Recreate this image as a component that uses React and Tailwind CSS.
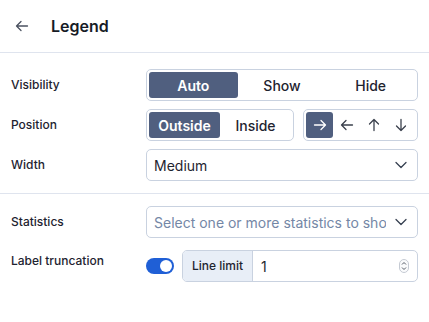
import React, { useState } from 'react';

const Arrow = ({ dir, className }) => {
    const rot = { right: 0, left: 180, up: -90, down: 90 }[dir];
    return (
        <svg width="14" height="14" viewBox="0 0 14 14" className={className} style={{ transform: `rotate(${rot}deg)` }}>
            <path d="M1.5 7h11M8 2.5L12.5 7 8 11.5" fill="none" stroke="currentColor" strokeWidth="1.3" strokeLinecap="round" strokeLinejoin="round" />
        </svg>
    );
};

const Chevron = () => (
    <svg width="14" height="14" viewBox="0 0 14 14" className="text-[#374151]">
        <path d="M2 4.5L7 9.5 12 4.5" fill="none" stroke="currentColor" strokeWidth="1.3" strokeLinecap="round" strokeLinejoin="round" />
    </svg>
);

const Segmented = ({ options, value, onChange, className = '' }) => (
    <div className={`flex h-8 p-[2px] border border-[#c9d2e0] rounded-[5px] bg-white ${className}`}>
        {options.map((o) => (
            <button
                key={o}
                onClick={() => onChange(o)}
                className={`flex-1 rounded-[3px] text-[14px] ${value === o ? 'bg-[#505f7f] text-white font-semibold' : 'text-[#1f2430] font-medium'}`}
            >
                {o}
            </button>
        ))}
    </div>
);

const Row = ({ label, top, children }) => (
    <div className={`flex ${top ? 'items-start' : 'items-center'}`}>
        <div className={`w-[135px] shrink-0 text-[12px] font-medium text-[#1e2330] ${top ? 'pt-[2px]' : ''}`}>{label}</div>
        <div className="flex-1 min-w-0">{children}</div>
    </div>
);

const App = () => {
    const [visibility, setVisibility] = useState('Auto');
    const [position, setPosition] = useState('Outside');
    const [dir, setDir] = useState('right');
    const [truncate, setTruncate] = useState(true);

    return (
        <div className="w-[429px] h-[322px] bg-white" style={{ fontFamily: 'Inter, "Noto Sans", sans-serif' }}>
            <div className="h-[53px] flex items-center border-b border-[#dfe4ee]">
                <button className="w-[44px] pl-[15px] text-[#4b5260]">
                    <Arrow dir="left" />
                </button>
                <h1 className="ml-[7px] text-[16px] font-semibold text-[#161b26]">Legend</h1>
            </div>

            <div className="px-[11px] pt-4 pb-3 flex flex-col gap-2">
                <Row label="Visibility">
                    <Segmented options={['Auto', 'Show', 'Hide']} value={visibility} onChange={setVisibility} />
                </Row>
                <Row label="Position">
                    <div className="flex gap-[9px]">
                        <Segmented options={['Outside', 'Inside']} value={position} onChange={setPosition} className="flex-1" />
                        <div className="flex h-8 w-[115px] p-[2px] border border-[#c9d2e0] rounded-[5px]">
                            {['right', 'left', 'up', 'down'].map((d) => (
                                <button
                                    key={d}
                                    onClick={() => setDir(d)}
                                    className={`flex-1 flex items-center justify-center rounded-[3px] ${dir === d ? 'bg-[#505f7f] text-white' : 'text-[#3a404c]'}`}
                                >
                                    <Arrow dir={d} />
                                </button>
                            ))}
                        </div>
                    </div>
                </Row>
                <Row label="Width">
                    <div className="h-8 flex items-center justify-between pl-[7px] pr-[9px] border border-[#c9d2e0] rounded-[5px]">
                        <span className="text-[14px] text-[#1f2430]">Medium</span>
                        <Chevron />
                    </div>
                </Row>
            </div>

            <div className="border-t border-[#dfe4ee]" />

            <div className="px-[11px] pt-3 flex flex-col gap-3">
                <Row label="Statistics">
                    <div className="h-8 flex items-center pl-[7px] pr-[9px] border border-[#c9d2e0] rounded-[5px]">
                        <span className="flex-1 min-w-0 text-[14px] text-[#7487a6] whitespace-nowrap overflow-hidden">Select one or more statistics to show</span>
                        <span className="pl-2 shrink-0"><Chevron /></span>
                    </div>
                </Row>
                <Row label="Label truncation" top>
                    <div className="flex items-center gap-2">
                        <button
                            onClick={() => setTruncate(!truncate)}
                            className={`w-[28px] h-4 shrink-0 rounded-full p-[2px] flex ${truncate ? 'bg-[#1f5fd6] justify-end' : 'bg-[#c9d2e0] justify-start'}`}
                        >
                            <span className="w-3 h-3 rounded-full bg-white" />
                        </button>
                        <div className="flex-1 h-8 flex border border-[#c9d2e0] rounded-[5px] overflow-hidden">
                            <div className="w-[70px] flex items-center justify-center bg-[#e8eef7] border-r border-[#c9d2e0] text-[12px] font-medium text-[#1f2430]">
                                Line limit
                            </div>
                            <div className="flex-1 flex items-center justify-between pl-[8px] pr-[8px]">
                                <span className="text-[14px] text-[#1f2430]">1</span>
                                <svg width="10" height="14" viewBox="0 0 10 14">
                                    <rect x="0.5" y="0.5" width="9" height="13" rx="4.5" fill="#fafbfc" stroke="#c5cad3" />
                                    <path d="M3 5.5L5 3.5 7 5.5M3 8.5L5 10.5 7 8.5" fill="none" stroke="#555b66" strokeWidth="1" />
                                </svg>
                            </div>
                        </div>
                    </div>
                </Row>
            </div>
        </div>
    );
};

export default App;
